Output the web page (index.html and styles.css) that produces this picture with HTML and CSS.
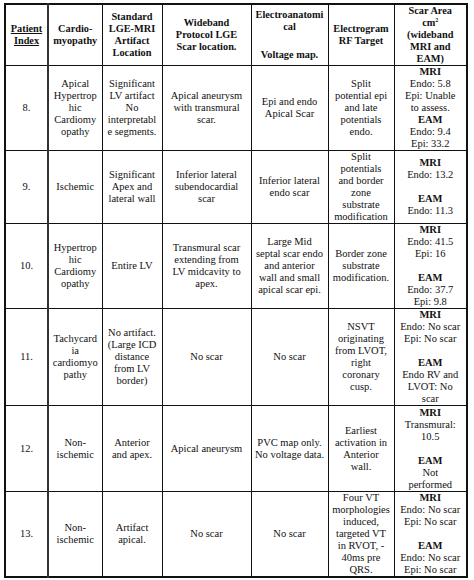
FILE: index.html
```html
<!DOCTYPE html>
<html>
<head>
<meta charset="utf-8">
<link rel="stylesheet" href="styles.css">
</head>
<body>
<div class="page">
<table class="tbl">
<colgroup>
<col class="c1"><col class="c2"><col class="c3"><col class="c4"><col class="c5"><col class="c6"><col class="c7">
</colgroup>
<thead>
<tr class="r-head">
<th class="first"><span class="u">Patient<br>Index</span></th>
<th>Cardio-<br>myopathy</th>
<th>Standard<br>LGE-MRI<br>Artifact<br>Location</th>
<th>Wideband<br>Protocol LGE<br>Scar location.</th>
<th class="ea">Electroanatomi<br>cal<br><span class="gap"></span>Voltage map.</th>
<th>Electrogram<br>RF Target</th>
<th>Scar Area<br>cm<sup>2</sup><br>(wideband<br>MRI and<br>EAM)</th>
</tr>
</thead>
<tbody>
<tr class="r8">
<td class="first">8.</td>
<td>Apical<br>Hypertrop<br>hic<br>Cardiomy<br>opathy</td>
<td>Significant<br>LV artifact<br>No<br>interpretabl<br>e segments.</td>
<td>Apical aneurysm<br>with transmural<br>scar.</td>
<td>Epi and endo<br>Apical Scar</td>
<td>Split<br>potential epi<br>and late<br>potentials<br>endo.</td>
<td><b>MRI</b><br>Endo: 5.8<br>Epi: Unable<br>to assess.<br><b>EAM</b><br>Endo: 9.4<br>Epi: 33.2</td>
</tr>
<tr class="r9">
<td class="first">9.</td>
<td>Ischemic</td>
<td>Significant<br>Apex and<br>lateral wall</td>
<td>Inferior lateral<br>subendocardial<br>scar</td>
<td>Inferior lateral<br>endo scar</td>
<td>Split<br>potentials<br>and border<br>zone<br>substrate<br>modification</td>
<td><b>MRI</b><br>Endo: 13.2<br><br><b>EAM</b><br>Endo: 11.3</td>
</tr>
<tr class="r10">
<td class="first">10.</td>
<td>Hypertrop<br>hic<br>Cardiomy<br>opathy</td>
<td>Entire LV</td>
<td>Transmural scar<br>extending from<br>LV midcavity to<br>apex.</td>
<td>Large Mid<br>septal scar endo<br>and anterior<br>wall and small<br>apical scar epi.</td>
<td>Border zone<br>substrate<br>modification.</td>
<td><b>MRI</b><br>Endo: 41.5<br>Epi: 16<br><br><b>EAM</b><br>Endo: 37.7<br>Epi: 9.8</td>
</tr>
<tr class="r11">
<td class="first">11.</td>
<td>Tachycard<br>ia<br>cardiomyo<br>pathy</td>
<td>No artifact.<br>(Large ICD<br>distance<br>from LV<br>border)</td>
<td>No scar</td>
<td>No scar</td>
<td>NSVT<br>originating<br>from LVOT,<br>right<br>coronary<br>cusp.</td>
<td><b>MRI</b><br>Endo: No scar<br>Epi: No scar<br><br><b>EAM</b><br>Endo RV and<br>LVOT: No<br>scar</td>
</tr>
<tr class="r12">
<td class="first">12.</td>
<td>Non-<br>ischemic</td>
<td>Anterior<br>and apex.</td>
<td>Apical aneurysm</td>
<td>PVC map only.<br>No voltage data.</td>
<td>Earliest<br>activation in<br>Anterior<br>wall.</td>
<td><b>MRI</b><br>Transmural:<br>10.5<br><br><b>EAM</b><br>Not<br>performed</td>
</tr>
<tr class="r13">
<td class="first">13.</td>
<td>Non-<br>ischemic</td>
<td>Artifact<br>apical.</td>
<td>No scar</td>
<td>No scar</td>
<td>Four VT<br>morphologies<br>induced,<br>targeted VT<br>in RVOT, -<br>40ms pre<br>QRS.</td>
<td><b>MRI</b><br>Endo: No scar<br>Epi: No scar<br><br><b>EAM</b><br>Endo: No scar<br>Epi: No scar</td>
</tr>
</tbody>
</table>
<p class="note">*Epi: Epicardial; Endo: Endocardial</p>
</div>
</body>
</html>
```
FILE: styles.css
```css
html, body {
  margin: 0;
  padding: 0;
  background: #fff;
}
body {
  font-family: "Liberation Serif", "Times New Roman", serif;
  color: #111;
  overflow: hidden;
  width: 474px;
  height: 580px;
}
.page {
  padding: 3px 0 0 4px;
}
.tbl {
  border-collapse: collapse;
  table-layout: fixed;
  border: 2px solid #111;
  font-size: 10.5px;
  line-height: 12px;
}
.c1 { width: 43px; }
.c2 { width: 54px; }
.c3 { width: 60px; }
.c4 { width: 89px; }
.c5 { width: 77px; }
.c6 { width: 66px; }
.c7 { width: 73px; }
.tbl th, .tbl td {
  border: 1px solid #111;
  padding: 0;
  text-align: center;
  vertical-align: middle;
  white-space: nowrap;
  overflow: hidden;
}
.tbl th {
  font-weight: bold;
  font-size: 10.3px;
}
.tbl .first {
  border-right: 2px solid #333;
}
.u {
  text-decoration: underline;
}
.gap {
  display: block;
  height: 16px;
}
sup {
  font-size: 6px;
  line-height: 0;
  vertical-align: 4px;
}
.r-head { height: 61px; }
.r8 { height: 85px; }
.r9 { height: 73px; }
.r10 { height: 85px; }
.r11 { height: 97px; }
.r12 { height: 86px; }
.r13 { height: 85px; }
.note {
  margin: 1px 0 0 2px;
  font-size: 10px;
  line-height: 12px;
}
```
